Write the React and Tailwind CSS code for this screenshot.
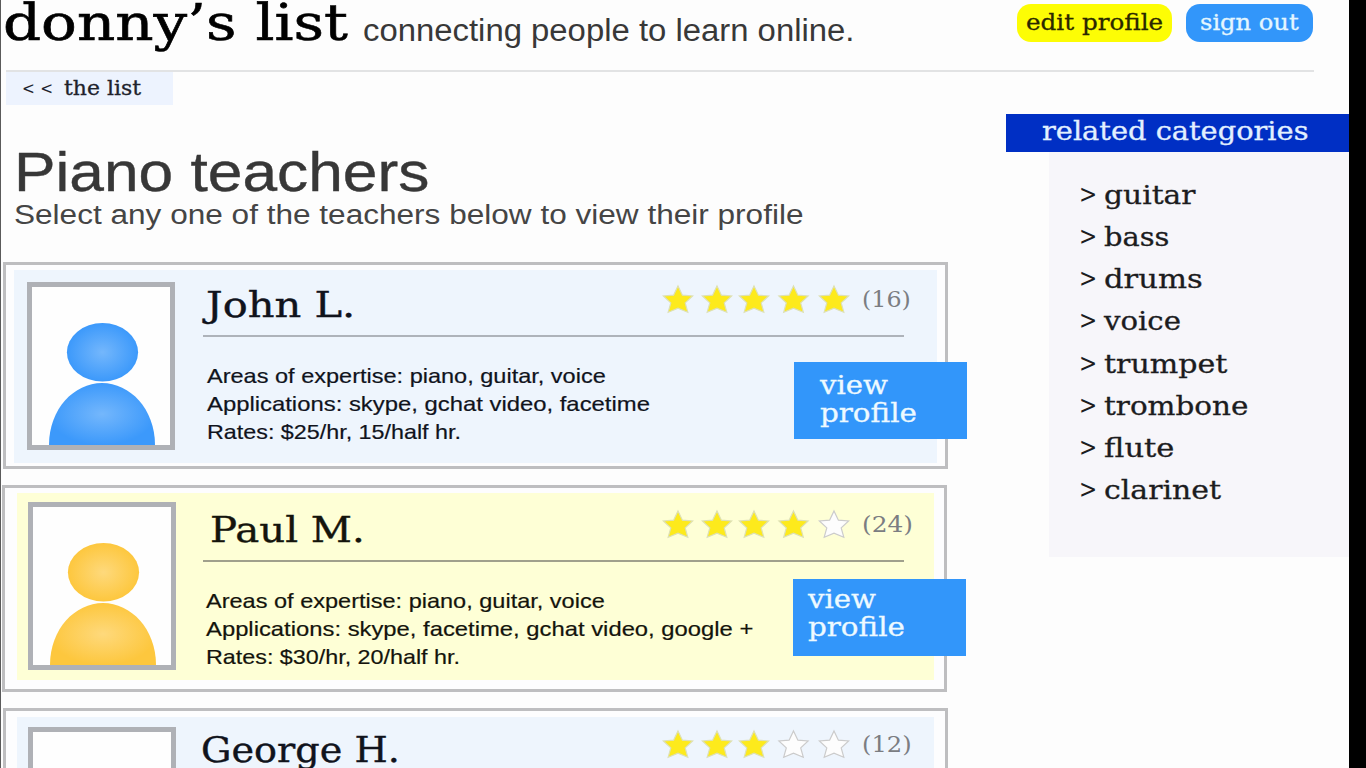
const SLAB = "font-['DejaVu_Serif','Liberation_Serif',serif]";
const SANS = "font-['Liberation_Sans',Arial,sans-serif]";

function Text({ className, children }) {
  return <span className={`block origin-left whitespace-nowrap ${className}`}>{children}</span>;
}

const STAR_X = [14, 53, 90, 129.5, 170];

function Stars({ value }) {
  return (
    <svg width="190" height="32" viewBox="0 0 190 32" className="shrink-0 overflow-visible">
      {STAR_X.map((x, i) => (
        <polygon
          key={x}
          transform={`translate(${x} 16)`}
          points="0,-14 4.4,-4.8 14.6,-4 7.2,2.9 9.8,12.2 0,8.2 -9.8,12.2 -7.2,2.9 -14.6,-4 -4.4,-4.8"
          fill={i < value ? "#fdea1c" : "#fdfdfd"}
          stroke={i < value ? "#dde0b4" : "#cbcbcb"}
          strokeWidth="1.2"
        />
      ))}
    </svg>
  );
}

function Avatar({ id, inner, outer, className }) {
  return (
    <div className={`h-[168px] w-[148px] shrink-0 border-5 border-[#afb1b6] bg-[#fefefe] ${className}`}>
      <svg width="138" height="158" viewBox="0 0 138 158" className="block">
        <defs>
          <radialGradient id={id}>
            <stop offset="0" stopColor={inner} />
            <stop offset="1" stopColor={outer} />
          </radialGradient>
        </defs>
        <ellipse cx="70.5" cy="65.3" rx="35.6" ry="29.2" fill={`url(#${id})`} />
        <path d="M17 158C17 122 42 96 70 96S123 122 123 158Z" fill={`url(#${id})`} />
      </svg>
    </div>
  );
}

const teachers = [
  {
    name: "John L.",
    rating: 5,
    votes: "(16)",
    details: [
      ["Areas of expertise: piano, guitar, voice", "scale-x-[1.12]"],
      ["Applications: skype, gchat video, facetime", "scale-x-[1.136]"],
      ["Rates: $25/hr, 15/half hr.", "scale-x-[1.11]"],
    ],
    colors: ["#74b7fc", "#3c99fb"],
    card: "ml-[2px] h-[207px]",
    panel: "ml-[8px] mt-[5px] w-[923px] h-[193px] bg-[#eef5fd] text-[#10131c]",
    avatar: "ml-[13px] mt-[12px]",
    body: "ml-[28px]",
    nameBox: "pl-[3px] pt-[15px]",
    nameScale: "scale-x-[1.154]",
    votesScale: "scale-x-[1.08]",
    stars: "pt-[14px]",
    head: "h-[65px]",
    rule: "h-[2px] bg-[#aeb3ba]",
    list: "pl-[4px]",
    button: "left-[788px] top-[97px]",
    label: "pl-[26px] pt-[9px]",
  },
  {
    name: "Paul M.",
    rating: 4,
    votes: "(24)",
    details: [
      ["Areas of expertise: piano, guitar, voice", "scale-x-[1.12]"],
      ["Applications: skype, facetime, gchat video, google +", "scale-x-[1.134]"],
      ["Rates: $30/hr, 20/half hr.", "scale-x-[1.11]"],
    ],
    colors: ["#fed97c", "#fdc73e"],
    card: "ml-[1px] mt-[16px] h-[207px]",
    panel: "ml-[12px] mt-[5px] w-[917px] h-[187px] bg-[#feffd6] text-[#14140c]",
    avatar: "ml-[11px] mt-[9px]",
    body: "ml-[27px]",
    nameBox: "pl-[7px] pt-[17px]",
    nameScale: "scale-x-[1.118]",
    votesScale: "scale-x-[1.13]",
    stars: "pt-[16px]",
    head: "h-[67px]",
    rule: "h-[2px] bg-[#a0a08c]",
    list: "pl-[3px]",
    button: "left-[788px] top-[91px]",
    label: "pl-[15px] pt-[6px]",
  },
  {
    name: "George H.",
    rating: 3,
    votes: "(12)",
    details: [],
    colors: ["#74b7fc", "#3c99fb"],
    card: "ml-[2px] mt-[16px] h-[207px]",
    panel: "ml-[11px] mt-[6px] w-[917px] h-[187px] bg-[#eef5fd] text-[#10131c]",
    avatar: "ml-[11px] mt-[10px]",
    body: "ml-[27px]",
    nameBox: "-ml-[2px] pt-[13px]",
    nameScale: "scale-x-[1.06]",
    votesScale: "scale-x-[1.1]",
    stars: "pt-[12px]",
    head: "h-[67px]",
    rule: "h-[2px] bg-[#aeb3ba]",
    list: "pl-[4px]",
  },
];

function TeacherCard({ t, index }) {
  return (
    <article className={`relative flex w-[945px] shrink-0 items-start border-3 border-[#bebec0] bg-[#fdfdfe] ${t.card}`}>
      <div className={`flex shrink-0 items-start ${t.panel}`}>
        <Avatar id={`tone-${index}`} inner={t.colors[0]} outer={t.colors[1]} className={t.avatar} />
        <div className={`w-[710px] shrink-0 ${t.body}`}>
          <div className={`flex justify-between ${t.head}`}>
            <h2 className={t.nameBox}>
              <Text className={`${SLAB} text-[36px] leading-[40px] [-webkit-text-stroke:0.4px] ${t.nameScale}`}>{t.name}</Text>
            </h2>
            <div className={`flex w-[249px] shrink-0 ${t.stars}`}>
              <Stars value={t.rating} />
              <Text className={`${SLAB} ml-[8px] text-[22px] leading-[31px] text-[#7b7d82] ${t.votesScale}`}>{t.votes}</Text>
            </div>
          </div>
          <div className={`w-[701px] ${t.rule}`} />
          <div className={`mt-[25px] ${t.list}`}>
            {t.details.map(([line, scale]) => (
              <Text key={line} className={`${SANS} text-[21px] leading-[28px] [-webkit-text-stroke:0.2px] ${scale}`}>
                {line}
              </Text>
            ))}
          </div>
        </div>
      </div>
      {t.button && (
        <a className={`absolute block h-[77px] w-[173px] bg-[#3296fa] text-[#eefaff] ${t.button} ${t.label}`}>
          <Text className={`${SLAB} scale-x-[1.12] text-[26px] leading-[28px] [-webkit-text-stroke:0.3px]`}>view</Text>
          <Text className={`${SLAB} scale-x-[1.13] text-[26px] leading-[28px] [-webkit-text-stroke:0.3px]`}>profile</Text>
        </a>
      )}
    </article>
  );
}

const categories = [
  ["guitar", "scale-x-[1.142]"],
  ["bass", "scale-x-[1.111]"],
  ["drums", "scale-x-[1.178]"],
  ["voice", "scale-x-[1.122]"],
  ["trumpet", "scale-x-[1.156]"],
  ["trombone", "scale-x-[1.132]"],
  ["flute", "scale-x-[1.176]"],
  ["clarinet", "scale-x-[1.15]"],
];

export default function App() {
  return (
    <div className="h-[768px] w-[1366px] overflow-hidden bg-black">
      <div className="h-full w-[1349px] overflow-hidden border-l border-[#5a5a5a] bg-[#fdfdfd]">
        <header className="ml-[5px] flex h-[72px] w-[1308px] items-start border-b-2 border-[#e2e3e4]">
          <h1 className="-ml-[3px] w-[360px] shrink-0">
            <Text className={`${SLAB} scale-x-[1.19] text-[50px] leading-[46px] text-black [-webkit-text-stroke:0.6px]`}>donny’s list</Text>
          </h1>
          <div className="w-[654px] shrink-0">
            <Text className={`${SANS} scale-x-[1.06] text-[31px] leading-[61px] text-[#383838]`}>
              connecting people to learn online.
            </Text>
          </div>
          <a className="mt-[4px] block h-[38px] w-[155px] shrink-0 rounded-[14px] bg-[#fdfd05] pl-[9px] text-[#2a2800]">
            <Text className={`${SLAB} scale-x-[1.07] text-[23px] leading-[37px] [-webkit-text-stroke:0.3px]`}>edit profile</Text>
          </a>
          <a className="ml-[14px] mt-[4px] block h-[38px] w-[127px] shrink-0 rounded-[14px] bg-[#3296fa] pl-[14px] text-[#e4f6ff]">
            <Text className={`${SLAB} scale-x-[1.05] text-[23px] leading-[37px] [-webkit-text-stroke:0.3px]`}>sign out</Text>
          </a>
        </header>
        <div className="flex items-start">
          <main className="w-[1005px] shrink-0">
            <nav className="ml-[5px] flex h-[33px] w-[167px] items-start bg-[#edf3fe] pl-[16px] text-[#20222c]">
              <div className="w-[42px]">
                <Text className={`${SLAB} scale-x-[0.9] text-[17px] leading-[32px] tracking-[6px]`}>&lt;&lt;</Text>
              </div>
              <Text className={`${SLAB} scale-x-[1.097] text-[20px] leading-[32px] [-webkit-text-stroke:0.3px]`}>the list</Text>
            </nav>
            <div className="ml-[13px] mt-[34px]">
              <Text className={`${SANS} scale-x-[1.132] text-[55px] leading-[66px] text-[#373737] [-webkit-text-stroke:0.4px]`}>Piano teachers</Text>
            </div>
            <div className="-mt-[6px] ml-[13px]">
              <Text className={`${SANS} scale-x-[1.169] text-[27px] leading-[32px] text-[#454545]`}>
                Select any one of the teachers below to view their profile
              </Text>
            </div>
            <section className="mt-[31px] flex flex-col items-start">
              {teachers.map((t, i) => (
                <TeacherCard key={t.name} t={t} index={i} />
              ))}
            </section>
          </main>
          <aside className="mt-[42px] w-[343px] shrink-0">
            <div className="h-[38px] bg-[#002fc4] pl-[36px]">
              <Text className={`${SLAB} scale-x-[1.11] text-[26px] leading-[35px] text-[#e2f0ff] [-webkit-text-stroke:0.3px]`}>related categories</Text>
            </div>
            <ul className="ml-[43px] h-[405px] bg-[#f7f6fa] pt-[22px] text-[#1c1c1e]">
              {categories.map(([name, scale]) => (
                <li key={name} className="flex h-[42.15px] items-start pl-[30px]">
                  <div className="w-[25px] shrink-0">
                    <Text className={`${SLAB} -mt-[1px] scale-x-[0.833] text-[26px] leading-[42px]`}>&gt;</Text>
                  </div>
                  <Text className={`${SLAB} text-[26px] leading-[42px] [-webkit-text-stroke:0.3px] ${scale}`}>{name}</Text>
                </li>
              ))}
            </ul>
          </aside>
        </div>
      </div>
    </div>
  );
}
